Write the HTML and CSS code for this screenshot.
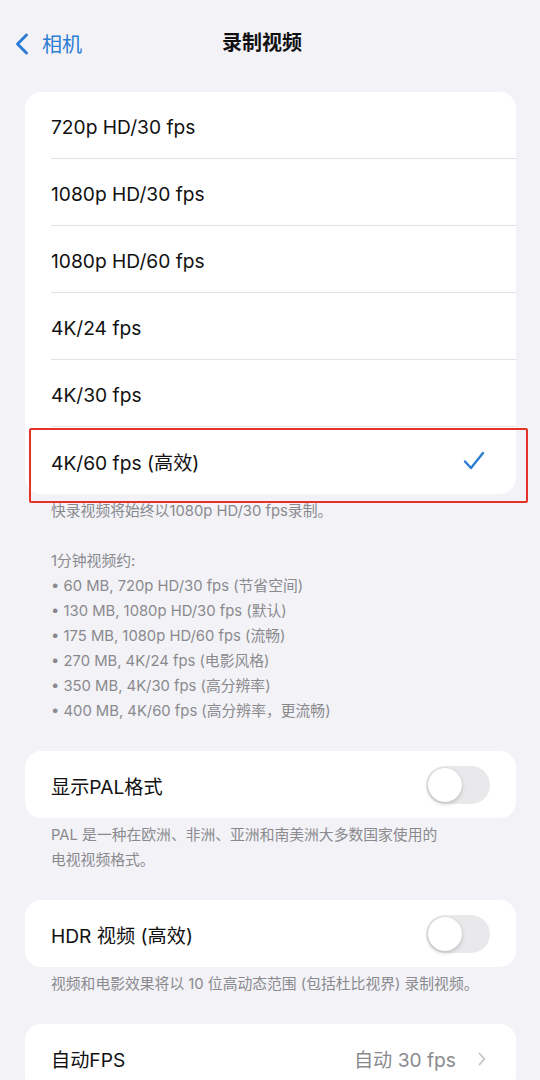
FILE: index.html
```html
<!DOCTYPE html>
<html lang="zh-CN">

<head>
  <meta charset="UTF-8">
  <meta name="viewport" content="width=device-width, initial-scale=1.0">
  <title>录制视频</title>
  <link rel="stylesheet" href="styles.css">
</head>

<body>

  <div class="nav">
    <a class="back">
      <svg width="16" height="24" viewBox="0 0 16 24">
        <path d="M12.5 3 L3.5 12 L12.5 21" fill="none" stroke="#2b7cd3" stroke-width="3" stroke-linecap="round" stroke-linejoin="round" />
      </svg>
      <span>相机</span>
    </a>
    <div class="title">录制视频</div>
  </div>

  <div class="section">
    <ul class="card">
      <li class="row">720p HD/30 fps</li>
      <li class="row">1080p HD/30 fps</li>
      <li class="row">1080p HD/60 fps</li>
      <li class="row">4K/24 fps</li>
      <li class="row">4K/30 fps</li>
      <li class="row selected">
        <span>4K/60 fps (高效)</span>
        <svg class="check" width="22" height="20" viewBox="0 0 22 20">
          <path d="M2 10.5 L8 17 L20 2" fill="none" stroke="#2b7cd3" stroke-width="2.4" stroke-linecap="round" stroke-linejoin="round" />
        </svg>
        <div class="highlight"></div>
      </li>
    </ul>
    <div class="footer">
      <p>快录视频将始终以1080p HD/30 fps录制。</p>
      <p class="gap">1分钟视频约:</p>
      <p>• 60 MB, 720p HD/30 fps (节省空间)</p>
      <p>• 130 MB, 1080p HD/30 fps (默认)</p>
      <p>• 175 MB, 1080p HD/60 fps (流畅)</p>
      <p>• 270 MB, 4K/24 fps (电影风格)</p>
      <p>• 350 MB, 4K/30 fps (高分辨率)</p>
      <p>• 400 MB, 4K/60 fps (高分辨率，更流畅)</p>
    </div>
  </div>

  <div class="section">
    <ul class="card">
      <li class="row last">
        <span>显示PAL格式</span>
        <div class="toggle"><div class="knob"></div></div>
      </li>
    </ul>
    <div class="footer">
      <p>PAL 是一种在欧洲、非洲、亚洲和南美洲大多数国家使用的</p>
      <p>电视视频格式。</p>
    </div>
  </div>

  <div class="section">
    <ul class="card">
      <li class="row last">
        <span>HDR 视频 (高效)</span>
        <div class="toggle"><div class="knob"></div></div>
      </li>
    </ul>
    <div class="footer">
      <p>视频和电影效果将以 10 位高动态范围 (包括杜比视界) 录制视频。</p>
    </div>
  </div>

  <div class="section">
    <ul class="card">
      <li class="row last">
        <span>自动FPS</span>
        <span class="value">自动 30 fps
          <svg width="8" height="14" viewBox="0 0 8 14">
            <path d="M1.5 1.5 L6.5 7 L1.5 12.5" fill="none" stroke="#c4c4c7" stroke-width="1.8" stroke-linecap="round" stroke-linejoin="round" />
          </svg>
        </span>
      </li>
    </ul>
  </div>

</body>

</html>
```

FILE: styles.css
```css
/* พื้นหลังแบบหน้าตั้งค่า */
html,
body {
  margin: 0;
  padding: 0;
  background-color: #f2f2f7;
  font-family: "Inter", "Noto Sans CJK SC", sans-serif;
  color: #111;
  overflow: hidden;
}

.nav {
  height: 86px;
  display: flex;
  align-items: center;
  justify-content: center;
  position: relative;
}

.back {
  position: absolute;
  left: 14px;
  top: 29px;
  display: flex;
  align-items: center;
  gap: 12px;
  color: #2b7cd3;
  font-size: 20px;
}

.title {
  font-size: 20px;
  font-weight: 700;
  color: #111;
  margin: 0 16px 4px 0;
}

.section {
  margin: 6px 24px 27px 25px;
}

.card {
  list-style: none;
  margin: 0;
  padding: 0 0 0 26px;
  background-color: #fff;
  border-radius: 16px;
}

.row {
  height: 67px;
  box-sizing: border-box;
  display: flex;
  align-items: center;
  justify-content: space-between;
  padding: 3px 26px 0 0;
  border-bottom: 1px solid #e2e2e6;
  font-size: 19.2px;
  position: relative;
}

.row:last-child,
.row.last {
  border-bottom: none;
}

.check {
  margin: -3px 5px 0 0;
}

/* กรอบสีแดงรอบแถวที่เลือก */
.highlight {
  position: absolute;
  left: -22px;
  right: -12px;
  top: 1px;
  height: 75px;
  border: 2px solid #e5332a;
  border-radius: 2px;
  box-sizing: border-box;
}

.footer {
  padding: 5px 0 0 26px;
  font-size: 14.8px;
  line-height: 25px;
  color: #8a8a8e;
}

.footer p {
  margin: 0;
}

.footer .gap {
  margin-top: 25px;
}

.toggle {
  width: 64px;
  height: 38px;
  margin-top: -3px;
  border-radius: 19px;
  background-color: #e9e9eb;
  position: relative;
}

.knob {
  position: absolute;
  left: 2px;
  top: 2px;
  width: 34px;
  height: 34px;
  border-radius: 50%;
  background-color: #fff;
  box-shadow: 0 2px 4px rgba(0, 0, 0, 0.18), 0 0 1px rgba(0, 0, 0, 0.15);
}

.value {
  display: flex;
  align-items: center;
  gap: 22px;
  color: #8a8a8e;
  margin-right: 4px;
}
```
